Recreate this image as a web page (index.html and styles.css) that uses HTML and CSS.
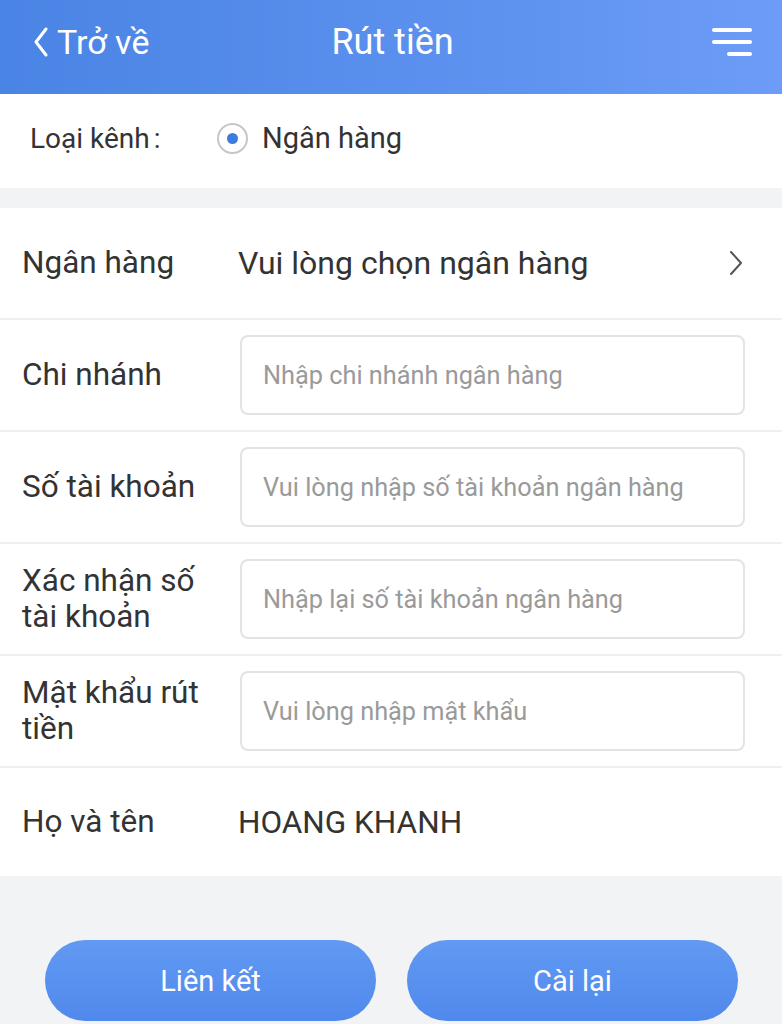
FILE: index.html
```html
<!DOCTYPE html>
<html lang="vi">
<head>
<meta charset="utf-8">
<title>Rút tiền</title>
<link rel="stylesheet" href="styles.css">
</head>
<body>
<div class="page">
  <header class="topbar">
    <div class="back">
      <svg class="back-icon" width="16" height="30" viewBox="0 0 16 30"><polyline points="13,2 3,15 13,28" fill="none" stroke="#fff" stroke-width="3" stroke-linecap="round" stroke-linejoin="round"/></svg>
      <span>Trở về</span>
    </div>
    <div class="title">Rút tiền</div>
    <div class="menu">
      <svg width="40" height="32" viewBox="0 0 40 32"><line x1="2" y1="4" x2="38" y2="4" stroke="#fff" stroke-width="4" stroke-linecap="round"/><line x1="2" y1="16" x2="38" y2="16" stroke="#fff" stroke-width="4" stroke-linecap="round"/><line x1="17" y1="28" x2="38" y2="28" stroke="#fff" stroke-width="4" stroke-linecap="round"/></svg>
    </div>
  </header>

  <section class="channel">
    <span class="channel-label">Loại kênh<span class="colon">:</span></span>
    <span class="radio"><span class="dot"></span></span>
    <span class="channel-value">Ngân hàng</span>
  </section>

  <section class="form">
    <div class="row">
      <div class="label">Ngân hàng</div>
      <div class="select">Vui lòng chọn ngân hàng</div>
      <svg class="chev" width="16" height="26" viewBox="0 0 16 26"><polyline points="3,2 13,13 3,24" fill="none" stroke="#555" stroke-width="2" stroke-linecap="round" stroke-linejoin="round"/></svg>
    </div>
    <div class="row">
      <div class="label">Chi nhánh</div>
      <div class="input">Nhập chi nhánh ngân hàng</div>
    </div>
    <div class="row">
      <div class="label">Số tài khoản</div>
      <div class="input">Vui lòng nhập số tài khoản ngân hàng</div>
    </div>
    <div class="row">
      <div class="label">Xác nhận số tài khoản</div>
      <div class="input">Nhập lại số tài khoản ngân hàng</div>
    </div>
    <div class="row">
      <div class="label">Mật khẩu rút tiền</div>
      <div class="input">Vui lòng nhập mật khẩu</div>
    </div>
    <div class="row last">
      <div class="label">Họ và tên</div>
      <div class="value">HOANG KHANH</div>
    </div>
  </section>

  <section class="actions">
    <button class="btn">Liên kết</button>
    <button class="btn">Cài lại</button>
  </section>
</div>
</body>
</html>
```

FILE: styles.css
```css
* { box-sizing: border-box; }
html, body { margin: 0; padding: 0; }
body {
  background: #f2f3f5;
  font-family: Roboto, "Noto Sans", "Liberation Sans", sans-serif;
  color: #333;
}
.page { width: 782px; min-height: 1024px; display: flex; flex-direction: column; }

.topbar {
  height: 94px;
  background: linear-gradient(90deg, #4a84e4 0%, #5b90ee 55%, #6c9cf7 100%);
  display: flex;
  align-items: center;
  padding: 0 30px 10px 33px;
  color: #fff;
}
.back { display: flex; align-items: center; gap: 8px; font-size: 34px; width: 200px; }
.title { flex: 1; text-align: center; font-size: 36px; padding-right: 140px; }
.menu { width: 60px; display: flex; justify-content: flex-end; }

.channel {
  height: 94px;
  background: #fff;
  display: flex;
  align-items: center;
  padding: 0 0 6px 30px;
  font-size: 28px;
  color: #333;
}
.channel-label { width: 187px; }
.colon { margin-left: 4px; }
.radio {
  width: 31px; height: 31px;
  border: 2px solid #c4c6ca;
  border-radius: 50%;
  display: flex; align-items: center; justify-content: center;
  margin-right: 14px;
}
.dot { width: 11px; height: 11px; border-radius: 50%; background: #3b7be2; }
.channel-value { font-size: 29px; }

.form { margin-top: 20px; background: #fff; display: flex; flex-direction: column; }
.row {
  height: 112px;
  border-bottom: 2px solid #efeff1;
  display: flex;
  align-items: center;
  padding: 0 36px 0 22px;
}
.row.last { border-bottom: none; height: 108px; }
.label { width: 216px; font-size: 31.5px; line-height: 36px; color: #333; padding-right: 16px; }
.select { flex: 1; font-size: 32px; color: #333; }
.value { flex: 1; font-size: 31.5px; color: #333; }
.chev { margin-right: 2px; }
.input {
  flex: 1;
  height: 80px;
  margin-left: 2px;
  border: 2px solid #e2e3e6;
  border-radius: 8px;
  display: flex;
  align-items: center;
  padding-left: 21px;
  font-size: 25.3px;
  color: #9a9a9a;
  margin-right: 1px;
}

.actions {
  flex: 1;
  display: flex;
  justify-content: space-between;
  padding: 64px 44px 0 45px;
}
.btn {
  width: 331px;
  height: 81px;
  border: none;
  border-radius: 41px;
  background: linear-gradient(180deg, #6199f3 0%, #5089ec 100%);
  color: #fff;
  font-family: Roboto, "Noto Sans", "Liberation Sans", sans-serif;
  font-size: 29px;
}
```
